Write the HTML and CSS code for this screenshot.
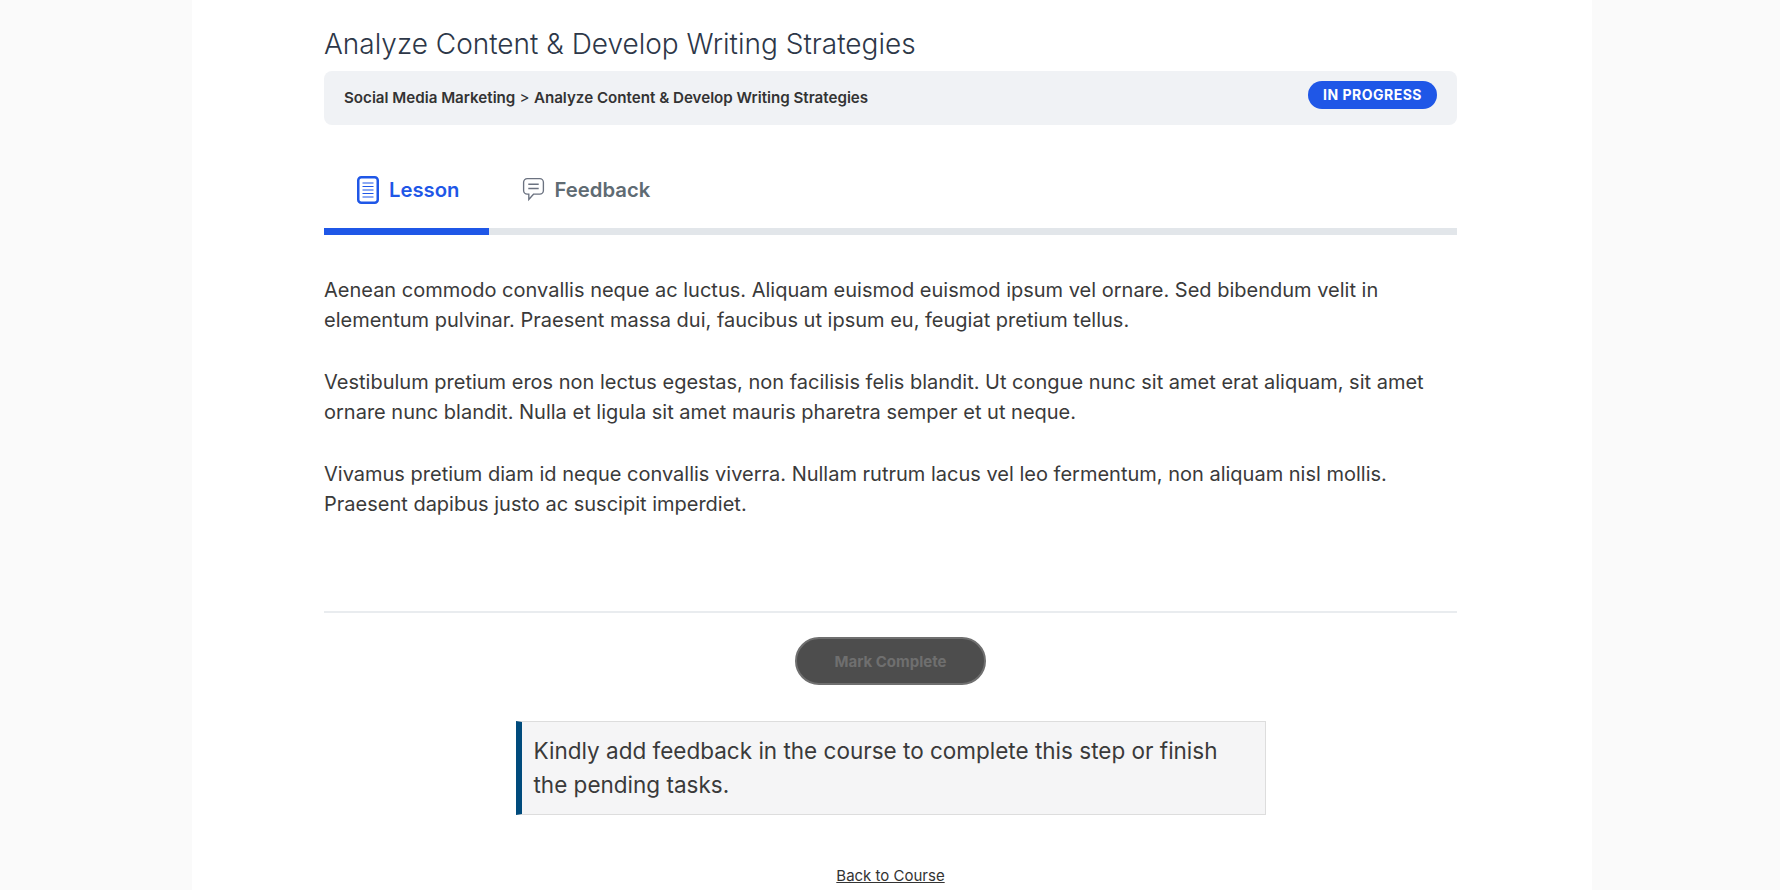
FILE: index.html
```html
<!DOCTYPE html>
<html lang="en">
<head>
    <meta charset="UTF-8">
    <meta name="viewport" content="width=device-width, initial-scale=1.0">
    <title>Analyze Content & Develop Writing Strategies</title>
    <link rel="stylesheet" href="styles.css">
</head>
<body>
    <div class="page">
        <h1 class="step-title">Analyze Content &amp; Develop Writing Strategies</h1>
        <div class="breadcrumb-bar">
            <p class="breadcrumb"><b>Social Media Marketing</b> &gt; <b>Analyze Content &amp; Develop Writing Strategies</b></p>
            <span class="status">IN PROGRESS</span>
        </div>

        <div class="tabs">
            <div class="tab active">
                <svg class="tab-icon" width="22" height="28" viewBox="0 0 22 28" fill="none" stroke="#1f57e7">
                    <rect x="1.250" y="1.250" width="19.500" height="25.500" rx="3" stroke-width="2.500"/>
                    <path d="M5.500 7h11M5.500 10.500h11M5.500 14h11M5.500 17.500h11M5.500 21h11" stroke-width="1.200"/>
                </svg>
                <span>Lesson</span>
            </div>
            <div class="tab">
                <svg class="tab-icon" width="23" height="25" viewBox="0 0 22 24" fill="none" stroke="#6b7280" stroke-width="1.300">
                    <path d="M5 1.500h12a3.500 3.500 0 0 1 3.500 3.500v8a3.500 3.500 0 0 1-3.500 3.500h-6l-4.500 5v-5H5a3.500 3.500 0 0 1-3.500-3.500V5A3.500 3.500 0 0 1 5 1.500z"/>
                    <path d="M6 7h10M6 11h10"/>
                </svg>
                <span>Feedback</span>
            </div>
        </div>

        <div class="lesson">
            <p>Aenean commodo convallis neque ac luctus. Aliquam euismod euismod ipsum vel ornare. Sed bibendum velit in elementum pulvinar. Praesent massa dui, faucibus ut ipsum eu, feugiat pretium tellus.</p>
            <p>Vestibulum pretium eros non lectus egestas, non facilisis felis blandit. Ut congue nunc sit amet erat aliquam, sit amet ornare nunc blandit. Nulla et ligula sit amet mauris pharetra semper et ut neque.</p>
            <p>Vivamus pretium diam id neque convallis viverra. Nullam rutrum lacus vel leo fermentum, non aliquam nisl mollis. Praesent dapibus justo ac suscipit imperdiet.</p>
        </div>

        <div class="actions">
            <button class="complete-btn" disabled>Mark Complete</button>
            <div class="notice">Kindly add feedback in the course to complete this step or finish the pending tasks.</div>
            <a class="back-link" href="#">Back to Course</a>
        </div>
    </div>
</body>
</html>
```

FILE: styles.css
```css
html, body {
    height: 100%;
}
body {
    margin: 0;
    overflow: hidden;
    background: #fafafa;
    font-family: Inter, "Noto Sans", sans-serif;
    color: #3a3a3a;
}
.page {
    box-sizing: border-box;
    width: 1400px;
    height: 890px;
    margin-left: 192px;
    padding: 28px 135px 0 132px;
    background: #fff;
}
.step-title {
    margin: 0 0 11px;
    font-size: 28px;
    font-weight: 300;
    line-height: 32px;
    color: #2d3748;
}
.breadcrumb-bar {
    display: flex;
    justify-content: space-between;
    align-items: flex-start;
    height: 54px;
    box-sizing: border-box;
    padding: 10px 20px;
    background: #f0f2f5;
    border-radius: 8px;
}
.breadcrumb {
    margin: 0;
    padding-top: 6px;
    font-size: 15.15px;
    line-height: 22px;
    color: #333;
}
.breadcrumb b {
    font-weight: 600;
}
.status {
    padding: 0 15px;
    background: #1f57e7;
    color: #fff;
    border-radius: 14px;
    font-size: 14px;
    font-weight: 700;
    letter-spacing: 0.5px;
    line-height: 28px;
}
.tabs {
    display: flex;
    height: 110px;
    box-sizing: border-box;
    border-bottom: 7px solid #e2e6ea;
}
.tab {
    display: flex;
    align-items: center;
    gap: 10px;
    box-sizing: border-box;
    height: 110px;
    margin-bottom: -7px;
    padding: 26px 29px 0 33px;
    border-bottom: 7px solid transparent;
    font-size: 20.3px;
    font-weight: 600;
    color: #5f6b73;
}
.tab.active {
    border-bottom-color: #1f57e7;
    color: #1f57e7;
}
.tab-icon {
    flex: none;
}
.lesson {
    box-sizing: border-box;
    height: 378px;
    padding-top: 40px;
    border-bottom: 2px solid #e9ecef;
}
.lesson p {
    margin: 0 0 32px;
    font-size: 20px;
    line-height: 30px;
}
.actions {
    display: flex;
    flex-direction: column;
    align-items: center;
}
.complete-btn {
    box-sizing: border-box;
    width: 191px;
    height: 48px;
    margin-top: 24px;
    border: 2px solid #6f6f6f;
    border-radius: 24px;
    background: #4d4d4d;
    color: #6f6f6f;
    font-family: inherit;
    font-size: 15px;
    font-weight: 700;
}
.notice {
    box-sizing: border-box;
    width: 750px;
    margin-top: 36px;
    padding: 12px 18px 12px 12px;
    background: #f5f5f6;
    border: 1px solid #ddd;
    border-left: 6px solid #004b7c;
    font-size: 22.5px;
    line-height: 34px;
}
.back-link {
    margin-top: 51px;
    font-size: 15px;
    color: #333;
}
```
